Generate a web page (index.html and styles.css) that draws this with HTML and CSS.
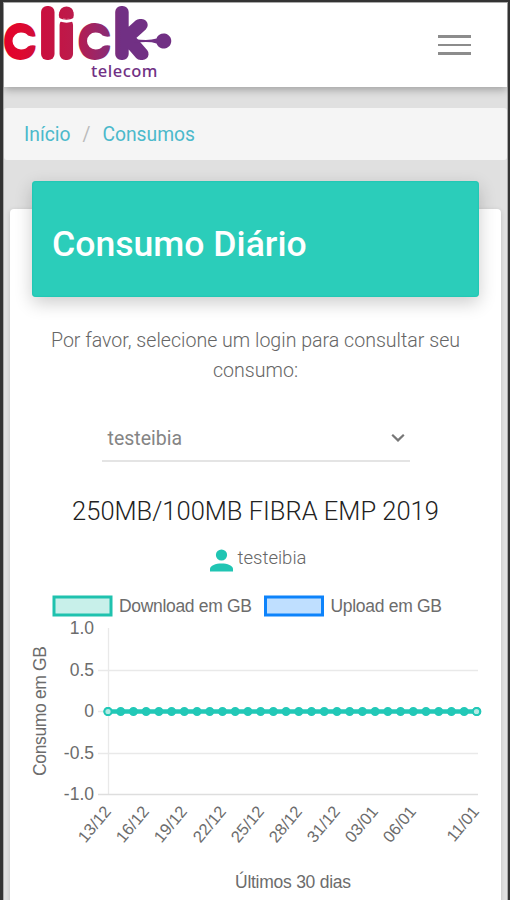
FILE: index.html
```html
<!DOCTYPE html>
<html lang="pt-BR">
<head>
<meta charset="utf-8">
<title>Consumo Diário</title>
<link rel="stylesheet" href="styles.css">
</head>
<body>
<div class="screen">
  <header class="navbar">
    <svg class="logo" width="180" height="82" viewBox="0 0 180 82" role="img" aria-label="click telecom">
      <defs>
        <linearGradient id="brand" gradientUnits="userSpaceOnUse" x1="0" y1="0" x2="168" y2="0">
          <stop offset="0" stop-color="#e4002b"/><stop offset=".12" stop-color="#df082e"/>
          <stop offset=".26" stop-color="#c9103f"/><stop offset=".44" stop-color="#bb1b4c"/>
          <stop offset=".6" stop-color="#95286c"/><stop offset=".72" stop-color="#713084"/>
          <stop offset="1" stop-color="#713084"/>
        </linearGradient>
        <path id="counter" d="M21 32.500Q26 32.500 28 35.500Q33 38 40 35V47Q33 44 28 46.500Q26 49.500 21 49.500A8.500 8.500 0 0 1 21 32.500Z" fill="#fff"/>
      </defs>
      <text class="wordmark" fill="url(#brand)" stroke="url(#brand)" y="54" x="8 42 60.5 82.5 116.5"><tspan class="round">c</tspan>li<tspan class="round">c</tspan>k</text>
      <use href="#counter"/><use href="#counter" x="74.500"/>
      <path d="M58 19Q66.500 23.500 75 19" fill="none" stroke="#fff" stroke-width="3"/>
      <ellipse cx="66.500" cy="12.800" rx="7" ry="6.300" fill="url(#brand)"/>
      <path d="M134 39Q149 41 156.500 38.500A7.600 7.600 0 1 1 156.500 43.500Q149 41 134 43Z" fill="#713084"/>
      <text class="tagline" x="91" y="76.500" textLength="66.500">telecom</text>
    </svg>
    <button class="menu" aria-label="Menu"><span></span><span></span><span></span></button>
  </header>
  <nav class="crumbs"><a>Início</a><span>/</span><a>Consumos</a></nav>
  <main class="card">
    <h1 class="title">Consumo Diário</h1>
    <p class="hint">Por favor, selecione um login para consultar seu<br>consumo:</p>
    <div class="select"><span>testeibia</span>
      <svg width="14" height="10" viewBox="0 0 14 10"><path d="M1.2 1.8L7 7.4L12.8 1.8" fill="none" stroke="#777" stroke-width="2.2"/></svg>
    </div>
    <h2 class="plan">250MB/100MB FIBRA EMP 2019</h2>
    <div class="user">
      <svg width="23" height="23" viewBox="0 0 23 23" fill="#20c5b3"><circle cx="11.5" cy="6" r="5.6"/><path d="M0 22.5V20C0 12.5 23 12.5 23 20V22.5Z"/></svg>
      <span>testeibia</span>
    </div>
    <svg class="chart" width="468" height="310" viewBox="22 590 468 310">
      <g stroke-width="3">
        <rect x="54" y="597" width="57" height="18" fill="#c8f0ea" stroke="#1fc2ae"/>
        <rect x="265.500" y="597" width="57" height="18" fill="#bfdfff" stroke="#0d83fb"/>
      </g>
      <text x="119" y="612" textLength="133">Download em GB</text>
      <text x="330.500" y="612" textLength="111.500">Upload em GB</text>
      <g stroke="#e9e9e9" stroke-width="1.300">
        <path d="M108.500 628V795M98 670.500H478M98 711.500H108M98 753.500H478"/>
        <path d="M98 794.500H478" stroke="#dedede"/>
      </g>
      <g text-anchor="end">
        <text x="94" y="634">1.0</text><text x="94" y="675.500">0.5</text><text x="94" y="717">0</text>
        <text x="94" y="758.500">-0.5</text><text x="94" y="800">-1.0</text>
      </g>
      <path d="M108 711.500H477" stroke="#22c8b7" stroke-width="4.500"/>
      <path class="points" d="M108 711.500H477.500" stroke-dasharray="0 12.720"/>
      <g fill="#b5ebe5" stroke="#22c8b7" stroke-width="2"><circle cx="108" cy="711.500" r="3.600"/><circle cx="476.500" cy="711.500" r="3.600"/></g>
      <text transform="translate(46 776) rotate(-90)" textLength="130">Consumo em GB</text>
      <g class="dates" text-anchor="end">
        <text transform="translate(112 812) rotate(-50)">13/12</text>
        <text transform="translate(150 812) rotate(-50)">16/12</text>
        <text transform="translate(188 812) rotate(-50)">19/12</text>
        <text transform="translate(227 812) rotate(-50)">22/12</text>
        <text transform="translate(265 812) rotate(-50)">25/12</text>
        <text transform="translate(303 812) rotate(-50)">28/12</text>
        <text transform="translate(341 812) rotate(-50)">31/12</text>
        <text transform="translate(379 812) rotate(-50)">03/01</text>
        <text transform="translate(417 812) rotate(-50)">06/01</text>
        <text transform="translate(480 812) rotate(-50)">11/01</text>
      </g>
      <text x="235" y="888" textLength="116">Últimos 30 dias</text>
    </svg>
  </main>
</div>
</body>
</html>
```
FILE: styles.css
```css
* { box-sizing: border-box; }
body { margin: 0; background: #e0e0e0; font-family: Roboto, sans-serif; font-weight: 300; }
.screen {
  height: 900px;
  overflow: hidden;
  border: solid #333;
  border-width: 2px 2px 0 3px;
  box-shadow: inset 1px 1px 0 #aaa, inset -1px 0 0 #aaa;
}
.navbar {
  height: 85px;
  margin: 0 1px;
  padding-right: 32px;
  display: flex;
  justify-content: space-between;
  background: #fff;
  border-top: 1px solid #aaa;
  box-shadow: 0 3px 8px rgba(0, 0, 0, .28);
}
.logo { margin: -3px 0 0 -4px; overflow: visible; }
.wordmark { font: 100 56px Roboto, sans-serif; stroke-width: 12px; stroke-linejoin: round; }
.round { font-size: 47px; }
.tagline { font: 500 16.5px "Noto Sans", sans-serif; fill: #713084; }
.menu {
  width: 41px;
  height: 30px;
  margin-top: 27px;
  padding: 5px 4px 4px;
  border: 0;
  background: none;
  display: flex;
  flex-direction: column;
  gap: 6px;
  align-self: flex-start;
}
.menu span { height: 2.5px; flex: none; background: #8c8c8c; }
.crumbs {
  height: 52px;
  margin: 21px 1px 0;
  padding: 2px 0 0 20px;
  display: flex;
  align-items: center;
  gap: 12px;
  background: #f5f5f5;
  border-radius: 3px;
  font-size: 19.3px;
  line-height: 50px;
  font-weight: 400;
  color: #4bb9cb;
}
.crumbs span { color: #bbb; }
.card {
  height: 800px;
  margin: 49px 7px 0;
  padding: 0 21px;
  background: #fff;
  border-radius: 4px;
  box-shadow: 0 1px 5px rgba(0, 0, 0, .14);
  display: flex;
  flex-direction: column;
  align-items: center;
}
.title {
  width: 447px;
  height: 116px;
  flex: none;
  margin: -28px 0 0;
  padding-left: 20px;
  background: #2bcdba;
  border-radius: 4px;
  box-shadow: inset 0 0 2px #0dbca8, 0 6px 18px rgba(0, 0, 0, .2);
  color: #fff;
  font-size: 35.6px;
  line-height: 126px;
  font-weight: 500;
}
.hint { margin: 29px 0 0; text-align: center; white-space: nowrap; font-size: 19.6px; line-height: 30px; color: #666; }
.select {
  width: 308px;
  height: 46px;
  flex: none;
  margin-top: 30px;
  padding: 0 5px 0 6px;
  display: flex;
  align-items: center;
  justify-content: space-between;
  border-bottom: 2px solid #e4e4e4;
  font-size: 19.5px;
  font-weight: 400;
  color: #858585;
}
.plan { margin: 33px 0 0; font-size: 25.5px; line-height: 32px; font-weight: 300; white-space: nowrap; color: #222; }
.user { height: 26px; margin: 19px 0 0 5px; display: flex; align-items: flex-end; gap: 5px; font-size: 18.5px; line-height: 27px; color: #666; }
.chart { flex: none; margin-top: 18px; font: 17.5px "Liberation Sans", sans-serif; fill: #6c6c6c; }
.dates { font-size: 16.5px; }
.points { fill: none; stroke: #22c8b7; stroke-width: 9px; stroke-linecap: round; }
```
